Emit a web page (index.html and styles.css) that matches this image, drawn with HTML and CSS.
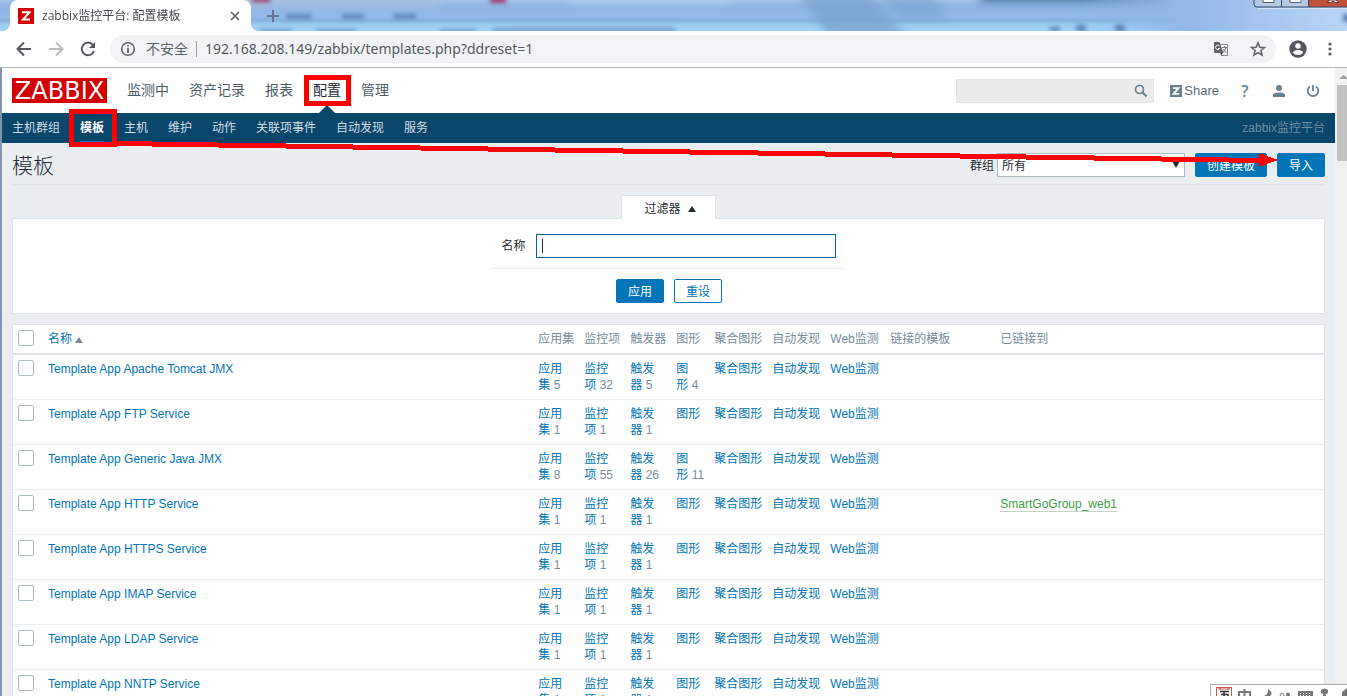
FILE: index.html
```html
<!DOCTYPE html>
<html lang="zh-CN">
<head>
<meta charset="utf-8">
<title>zabbix监控平台: 配置模板</title>
<link rel="stylesheet" href="styles.css">
</head>
<body>
<div class="window">
  <header class="tabstrip">
    <svg class="glass" viewBox="0 0 1347 31" preserveAspectRatio="none" aria-hidden="true">
      <defs>
        <linearGradient id="sky" x1="0" x2="0" y1="0" y2="1"><stop offset="0" stop-color="#a4c4e8"/><stop offset="0.2" stop-color="#8eb4e2"/><stop offset="0.55" stop-color="#94bbec"/><stop offset="0.65" stop-color="#86b0da"/><stop offset="0.8" stop-color="#9bcdf3"/><stop offset="1" stop-color="#a2d4f9"/></linearGradient>
        <linearGradient id="right" x1="0" x2="1" y1="0" y2="0"><stop offset="0" stop-color="#92b8e8" stop-opacity="0"/><stop offset="0.4" stop-color="#92b8e8"/><stop offset="1" stop-color="#b9d6f5"/></linearGradient>
        <filter id="soft" x="-10%" y="-100%" width="120%" height="300%"><feGaussianBlur stdDeviation="4"/></filter>
        <filter id="soft2" x="-10%" y="-100%" width="120%" height="300%"><feGaussianBlur stdDeviation="2"/></filter>
      </defs>
      <rect width="1347" height="31" fill="url(#sky)"/>
      <g filter="url(#soft)">
        <rect x="240" y="-4" width="200" height="12" fill="#a2bedf"/>
        <rect x="570" y="-4" width="160" height="7" fill="#b4d2f2"/>
        <path d="M800 -6H870L910 40H830Z" fill="#759fcb" opacity="0.7"/>
        <path d="M880 -6H930L950 20H900Z" fill="#759fcb" opacity="0.5"/>
        <rect x="980" y="-8" width="190" height="10" fill="#42719f"/>
      </g>
      <rect x="1080" width="267" height="31" fill="url(#right)"/>
      <g filter="url(#soft2)" fill="#587eb0">
        <g opacity="0.85"><rect x="286" y="14" width="25" height="5"/><rect x="342" y="14" width="22" height="5"/><rect x="394" y="14" width="22" height="5"/></g>
        <g opacity="0.7"><rect x="260" y="29" width="32" height="4"/><rect x="316" y="29" width="40" height="4"/><rect x="440" y="29" width="36" height="4"/><rect x="492" y="28" width="184" height="4"/></g>
        <rect x="1050" y="27" width="10" height="4"/><rect x="1076" y="25" width="10" height="6"/><rect x="1115" y="25" width="10" height="6"/>
        <rect x="1343" y="14" width="8" height="8"/>
        <rect x="252" y="-3" width="18" height="5" fill="#a33b62"/><rect x="490" y="-3" width="16" height="6" fill="#963d68"/>
      </g>
    </svg>
    <div class="tab">
      <span class="favicon"><svg width="10" height="10" viewBox="0 0 10 10"><path d="M1 1.2H8.6L2 8.6H9" fill="none" stroke="#fff" stroke-width="2"/></svg></span>
      <span class="tab-title">zabbix监控平台: 配置模板</span>
      <button class="plain" aria-label="关闭标签页"><svg width="10" height="10" viewBox="0 0 10 10"><path d="M1 1L9 9M9 1L1 9" stroke="#5f6368" stroke-width="1.6"/></svg></button>
    </div>
    <button class="plain newtab" aria-label="新标签页"><svg width="12" height="12" viewBox="0 0 12 12"><path d="M6 0V12M0 6H12" stroke="#66758a" stroke-width="2"/></svg></button>
    <div class="caption">
      <svg width="94" height="9" viewBox="0 0 94 9" aria-hidden="true"><path d="M1 0V4Q1 7 4 7H94V0Z" fill="#b5cae4"/><path d="M56 0H94V7H56Z" fill="#c45036"/><path d="M1 0V4Q1 7 4 7H94M28.500 0V7M55.500 0V7" fill="none" stroke="#344b70"/><path d="M4 8.500H94" stroke="#d5e5f8"/><path d="M10 0V2.500H21V0M37 0V2.500H48V0" fill="#fff" stroke="#565e70"/><path d="M74 2.500L77 0H83L86 2.500H82L80 1L78 2.500Z" fill="#fff" stroke="#6c3b42"/></svg>
    </div>
  </header>

  <div class="toolbar">
    <button class="plain" aria-label="后退"><svg width="16" height="16" viewBox="0 0 16 16"><path d="M15 8H2M8 1.500L1.500 8L8 14.500" fill="none" stroke="#54585c" stroke-width="2"/></svg></button>
    <button class="plain" aria-label="前进"><svg width="16" height="16" viewBox="0 0 16 16"><path d="M1 8H14M8 1.500L14.500 8L8 14.500" fill="none" stroke="#babcbe" stroke-width="2"/></svg></button>
    <button class="plain" aria-label="刷新"><svg width="16" height="16" viewBox="0 0 16 16"><path d="M13 4A6.300 6.300 0 1 0 14 10" fill="none" stroke="#54585c" stroke-width="2"/><path d="M15 1V7H9Z" fill="#54585c"/></svg></button>
    <div class="omnibox">
      <svg width="16" height="16" viewBox="0 0 16 16"><circle cx="8" cy="8" r="6.300" fill="none" stroke="#5f6368" stroke-width="1.500"/><path d="M8 7V12M8 4V5.600" stroke="#5f6368" stroke-width="1.700"/></svg>
      <span class="insecure">不安全</span>
      <input class="url" aria-label="地址" value="192.168.208.149/zabbix/templates.php?ddreset=1">
      <button class="plain" aria-label="翻译"><svg width="16" height="16" viewBox="0 0 16 16"><path d="M6 3.500H14.500V14.500H8" fill="#f8f8f8" stroke="#85888b"/><path d="M1 1H6.500L10.500 12H2Q1 12 1 11Z" fill="#5f6368"/><path d="M6.500 5A2.200 2.200 0 1 0 6.700 7.500H5" fill="none" stroke="#fff"/><path d="M7 12H10L8 14.500Z" fill="#5f6368"/><path d="M9 6.500H14M11.500 5V6.500M13 7Q12 10 9.500 11.500M10 8L13.500 12" fill="none" stroke="#777"/></svg></button>
      <button class="plain" aria-label="收藏"><svg width="16" height="16" viewBox="0 0 16 16"><path d="M8 1.700L9.800 6.200L14.500 6.500L10.900 9.500L12.100 14.200L8 11.600L3.900 14.200L5.100 9.500L1.500 6.500L6.200 6.200Z" fill="none" stroke="#5f6368" stroke-width="1.500"/></svg></button>
    </div>
    <button class="plain" aria-label="用户"><svg width="18" height="18" viewBox="0 0 18 18"><circle cx="9" cy="9" r="8.700" fill="#54585c"/><circle cx="9" cy="6" r="2.700" fill="#fff"/><path d="M3.800 12.800Q5 10 9 10T14.200 12.800Q12 15 9 15T3.800 12.800Z" fill="#fff"/></svg></button>
    <button class="plain" aria-label="菜单"><svg width="4" height="14" viewBox="0 0 4 14" fill="#54585c"><circle cx="2" cy="2" r="1.600"/><circle cx="2" cy="7" r="1.600"/><circle cx="2" cy="12" r="1.600"/></svg></button>
  </div>

  <div class="viewport">
    <div class="page">
      <div class="topbar">
        <a class="logo" href="#" aria-label="ZABBIX">ZABBIX</a>
        <nav class="mainnav"><a href="#">监测中</a><a href="#">资产记录</a><a href="#">报表</a><a class="selected" href="#">配置</a><a href="#">管理</a></nav>
        <div class="search"><input aria-label="搜索"><button class="plain" aria-label="搜索"><svg width="14" height="14" viewBox="0 0 14 14"><circle cx="5.500" cy="5.500" r="4" fill="none" stroke="#69808d" stroke-width="1.700"/><path d="M8.500 8.500L12.500 12.500" stroke="#69808d" stroke-width="2.200"/></svg></button></div>
        <a class="share" href="#"><svg width="12" height="12" viewBox="0 0 12 12"><rect width="12" height="12" fill="#69808d"/><path d="M3 3.200H8.500L3.500 8.800H9.200" fill="none" stroke="#fff" stroke-width="1.800"/></svg>Share</a>
        <a class="help" href="#" aria-label="帮助">?</a>
        <a class="user" href="#" aria-label="个人资料"><svg width="12" height="12" viewBox="0 0 12 12" fill="#69808d"><circle cx="6" cy="3" r="3"/><path d="M0 12V10Q0 7.500 6 7.500T12 10V12Z"/></svg></a>
        <a class="power" href="#" aria-label="退出"><svg width="14" height="14" viewBox="0 0 14 14" fill="none" stroke="#69808d" stroke-width="1.800"><path d="M7 1V7M4 2.500A5.300 5.300 0 1 0 10 2.500"/></svg></a>
      </div>
      <nav class="subnav">
        <a href="#">主机群组</a><a class="selected" href="#">模板</a><a href="#">主机</a><a href="#">维护</a><a href="#">动作</a><a href="#">关联项事件</a><a href="#">自动发现</a><a href="#">服务</a>
        <span class="server">zabbix监控平台</span>
      </nav>
      <main>
        <div class="heading">
          <h1>模板</h1>
          <div class="actions">
            <label for="group">群组</label>
            <div class="select"><select id="group"><option>所有</option></select></div>
            <button class="btn">创建模板</button>
            <button class="btn">导入</button>
          </div>
        </div>
        <div class="filter-tab"><button class="toggle">过滤器<svg width="8" height="6" viewBox="0 0 8 6"><path d="M4 0L8 6H0Z" fill="#1f2c33"/></svg></button></div>
        <form class="filter">
          <div class="field"><label for="name">名称</label><input id="name"></div>
          <div class="buttons"><button class="btn" type="button">应用</button><button class="btn alt" type="button">重设</button></div>
        </form>
        <table class="list">
          <colgroup><col class="c-check"><col class="c-name"><col class="c-count"><col class="c-count"><col class="c-count"><col class="c-graph"><col class="c-wide"><col class="c-wide"><col class="c-web"><col class="c-linked"><col></colgroup>
          <thead><tr><th><input type="checkbox" aria-label="全选"></th><th><a href="#">名称<svg class="sort" width="8" height="6" viewBox="0 0 8 6"><path d="M4 0L8 6H0Z" fill="#768d99"/></svg></a></th><th>应用集</th><th>监控项</th><th>触发器</th><th>图形</th><th>聚合图形</th><th>自动发现</th><th>Web监测</th><th>链接的模板</th><th>已链接到</th></tr></thead>
          <tbody id="rows"></tbody>
        </table>
      </main>
    </div>
    <div class="scrollbar"><svg width="17" height="17" viewBox="0 0 17 17"><path d="M4 11L8.500 7L13 11Z" fill="#a0a0a0"/></svg><div class="thumb"></div></div>
  </div>

  <svg class="marks" width="1347" height="200" viewBox="0 0 1347 200" aria-hidden="true" shape-rendering="crispEdges">
    <g fill="none" stroke="#f00" stroke-width="5"><rect x="306.500" y="77.500" width="42" height="26"/><rect x="71.500" y="111.500" width="43" height="33"/><path d="M117 143.500L1262 160.500"/></g>
    <path d="M1259 153L1278 160L1259 167Z" fill="#f00"/>
  </svg>
  <div class="ime">
    <svg width="136" height="11" viewBox="0 0 136 11" aria-hidden="true"><rect x="5.500" y="2.500" width="15" height="12" fill="#fff" stroke="#d4584c"/><path d="M7 4H19M9 2V5M17 2V5" stroke="#d4584c"/><path d="M9 6.500H18M13 6V11M10 9.500H17V11" fill="none" stroke="#333" stroke-width="1.600"/><g fill="none" stroke="#777" stroke-width="2"><path d="M28 11V7H39V11M33.500 4V11"/></g><path d="M57 4Q63 8 59 11H53Q58 9 57 4Z" fill="#777"/><circle cx="71" cy="10" r="1.800" fill="none" stroke="#777"/><circle cx="77" cy="9.500" r="2" fill="#777"/><path d="M87 6H102V11H87Z" fill="#777"/><path d="M89 8.500H101M89 10.500H101" stroke="#fff" stroke-dasharray="1 2"/><path d="M110 8V5Q113.500 2 117 5V8L115 9V11H112V9Z" fill="#777"/><path d="M131 11V7L136 3V11Z" fill="#777"/></svg>
  </div>
</div>
<script src="rows.js"></script>
</body>
</html>
```
FILE: styles.css
```css
* { box-sizing: border-box; }
body { margin: 0; overflow: hidden; font: 12px/16px "Liberation Sans", "Noto Sans CJK SC", sans-serif; color: #1f2c33; }
a { color: #0275b8; text-decoration: none; }
button, input, select { font: inherit; color: inherit; }
svg { display: block; flex: none; }
.plain { border: 0; padding: 0; background: none; }
.window { position: relative; height: 100vh; display: flex; flex-direction: column; overflow: hidden; }

.tabstrip { position: relative; height: 31px; flex: none; display: flex; align-items: center; padding-left: 10px; }
.glass { position: absolute; inset: 0; width: 100%; height: 100%; z-index: -1; }
.tab { position: relative; align-self: stretch; width: 241px; display: flex; align-items: center; padding: 0 11px 0 8px; background: #fff; border-radius: 8px 8px 0 0; font-size: 12px; color: #45494d; }
.tab::before, .tab::after { content: ""; position: absolute; bottom: 0; width: 8px; height: 8px; }
.tab::before { right: 100%; background: radial-gradient(circle at 0 0, transparent 8px, #fff 8px); }
.tab::after { left: 100%; background: radial-gradient(circle at 100% 0, transparent 8px, #fff 8px); }
.favicon { width: 16px; height: 16px; display: grid; place-items: center; background: #d40000; }
.tab-title { flex: 1; margin-left: 8px; font-family: "Open Sans", "Noto Sans CJK SC", sans-serif; }
.newtab { margin-left: 16px; }
.caption { margin-left: auto; align-self: flex-start; }

.toolbar { flex: none; height: 37px; display: flex; align-items: center; gap: 16px; padding: 0 15px 0 16px; background: #fff; border-bottom: 1px solid #b3b5b7; }
.omnibox { flex: 1; height: 28px; display: flex; align-items: center; padding: 0 10px; margin-left: -2px; margin-right: -3px; border-radius: 14px; background: #f1f3f4; font: 14px/20px "Noto Sans", "Noto Sans CJK SC", sans-serif; color: #5f6368; }
.insecure { margin-left: 10px; padding-right: 8px; line-height: 16px; border-right: 1px solid #9b9ea1; }
.url { flex: 1; border: 0; background: none; padding: 0 8px; color: #55595d; outline: 0; }
.omnibox button + button { margin-left: 21px; }
.toolbar > button:last-child { margin-left: 5px; }

.viewport { flex: 1; min-height: 0; display: flex; border-left: 2px solid #8294ae; }
.page { flex: 1; min-width: 0; overflow: hidden; background: #ebeef0; }
.scrollbar { width: 12px; flex: none; overflow: hidden; background: #f1f1f1; }
.thumb { height: 76px; margin-left: 2px; background: #c1c1c1; }

.topbar { height: 45px; display: flex; align-items: center; padding: 0 15px 0 10px; background: #fff; }
.logo { width: 95px; height: 25px; background: #d40000; color: #fff; font: 24px/26px "DejaVu Sans", sans-serif; text-align: center; }
.mainnav { display: flex; align-self: stretch; flex: 1; gap: 20px; margin-left: 20px; }
.mainnav a { position: relative; font-size: 14px; line-height: 45px; color: #4c5c66; }
.mainnav .selected { color: #1f2c33; }
.mainnav .selected::after { content: ""; position: absolute; left: 50%; bottom: 0; margin-left: -8px; border: 8px solid transparent; border-top: 0; border-bottom-color: #0a466a; }
.search { display: flex; align-items: center; width: 198px; height: 24px; padding-right: 5px; background: #ececec; border: 1px solid #e3e4e5; }
.search input { flex: 1; min-width: 0; height: 22px; border: 0; background: none; }
.share { display: flex; align-items: center; gap: 2px; margin-left: 16px; font-size: 12px; color: #5a6c77; font-size: 13px; }
.help { width: 10px; margin-left: 21px; font: 600 16px/16px "Open Sans", sans-serif; text-align: center; color: #69808d; }
.user { margin-left: 23px; }
.power { margin-left: 21px; }

.subnav { height: 30px; display: flex; align-items: stretch; gap: 20px; padding: 0 10px; background: #0a466a; line-height: 30px; }
.subnav a { color: #d3dfe6; }
.subnav .selected { color: #fff; font-weight: bold; border-bottom: 2px solid #0275b8; }
.server { margin-left: auto; color: #6d8ea3; }

main { padding: 0 10px; }
.heading { height: 42px; display: flex; align-items: center; justify-content: space-between; border-bottom: 1px solid #dfe4e7; padding-top: 2px; }
h1 { margin: 0; padding-top: 3px; font-size: 21px; line-height: 24px; font-weight: 300; }
.actions { display: flex; align-items: center; }
.actions label { padding-top: 3px; }
.select { position: relative; width: 188px; margin: 0 10px 0 3px; }
.select select { display: block; width: 100%; height: 24px; padding: 3px 4px 0; appearance: none; border: 1px solid #acbbc2; border-radius: 0; background: #fff; }
.select::after { content: ""; position: absolute; right: 5px; top: 8px; border: 4px solid transparent; border-top: 7px solid #1f2c33; border-bottom: 0; }
.btn { height: 24px; padding: 2px 11px 0; border: 1px solid #0275b8; border-radius: 2px; background: #0275b8; color: #fff; }
.btn + .btn { margin-left: 10px; }
.alt { background: #fff; color: #0275b8; }
.filter-tab { display: flex; justify-content: center; margin-top: 10px; }
.toggle { position: relative; display: flex; align-items: center; gap: 7px; height: 24px; padding: 2px 19px 0 22px; margin-bottom: -1px; border: 1px solid #dfe4e7; border-bottom: 0; background: #fff; }
.filter { display: flex; flex-direction: column; align-items: center; background: #fff; border: 1px solid #dfe4e7; }
.field { display: flex; align-items: center; padding: 15px 10px 10px; border-bottom: 1px solid #ebeef0; }
.field input { width: 300px; height: 24px; margin-left: 10px; padding: 0 5px; border: 1px solid #02659f; outline: 0; background: linear-gradient(#1f2c33, #1f2c33) 5px 4px / 1px 14px no-repeat #fff; }
.buttons { padding: 10px 10px 10px 11px; }

.list { width: 100%; margin-top: 10px; table-layout: fixed; border-collapse: separate; border-spacing: 0; background: #fff; border: 1px solid #dfe4e7; }
.c-check { width: 30px; } .c-name { width: 37.4%; } .c-count { width: 46px; } .c-graph { width: 38px; } .c-wide { width: 58px; } .c-web { width: 60px; } .c-linked { width: 110px; }
th, td { padding: 6px 5px; text-align: left; vertical-align: top; }
th:first-child, td:first-child { padding-top: 5px; }
th { height: 30px; font-weight: 400; color: #768d99; white-space: nowrap; border-bottom: 2px solid #dfe4e7; }
td { border-bottom: 1px solid #ebeef0; color: #768d99; }
.list input { appearance: none; display: block; width: 16px; height: 16px; margin: 0; border: 1px solid #acbbc2; border-radius: 2px; background: #fff; }
.sort { display: inline-block; margin-left: 3px; }
.enabled { color: #429e47; border-bottom: 1px solid #c5d0c6; }

.marks { position: absolute; left: 0; top: 0; pointer-events: none; }
.ime { position: absolute; right: 0; bottom: 0; height: 12px; border: 1px solid #aaa; border-width: 1px 0 0 1px; background: #fff; }
```
FILE: rows.js
```javascript
const templates = [
  ["Apache Tomcat JMX", 5, 32, 5, 4],
  ["FTP Service", 1, 1, 1],
  ["Generic Java JMX", 8, 55, 26, 11],
  ["HTTP Service", 1, 1, 1, 0, "SmartGoGroup_web1"],
  ["HTTPS Service", 1, 1, 1],
  ["IMAP Service", 1, 1, 1],
  ["LDAP Service", 1, 1, 1],
  ["NNTP Service", 1, 1, 1]
];
const cell = (label, n) => `<td><a href="#">${label}</a>${n ? "&nbsp;" + n : ""}</td>`;
document.getElementById("rows").innerHTML = templates.map(([name, apps, items, triggers, graphs, linked]) =>
  `<tr><td><input type="checkbox" aria-label="Template App ${name}"></td>` + cell("Template App " + name) +
  cell("应用集", apps) + cell("监控项", items) + cell("触发器", triggers) + cell("图形", graphs) +
  cell("聚合图形") + cell("自动发现") + cell("Web监测") +
  `<td></td><td>${linked ? `<a class="enabled" href="#">${linked}</a>` : ""}</td></tr>`).join("");
```
